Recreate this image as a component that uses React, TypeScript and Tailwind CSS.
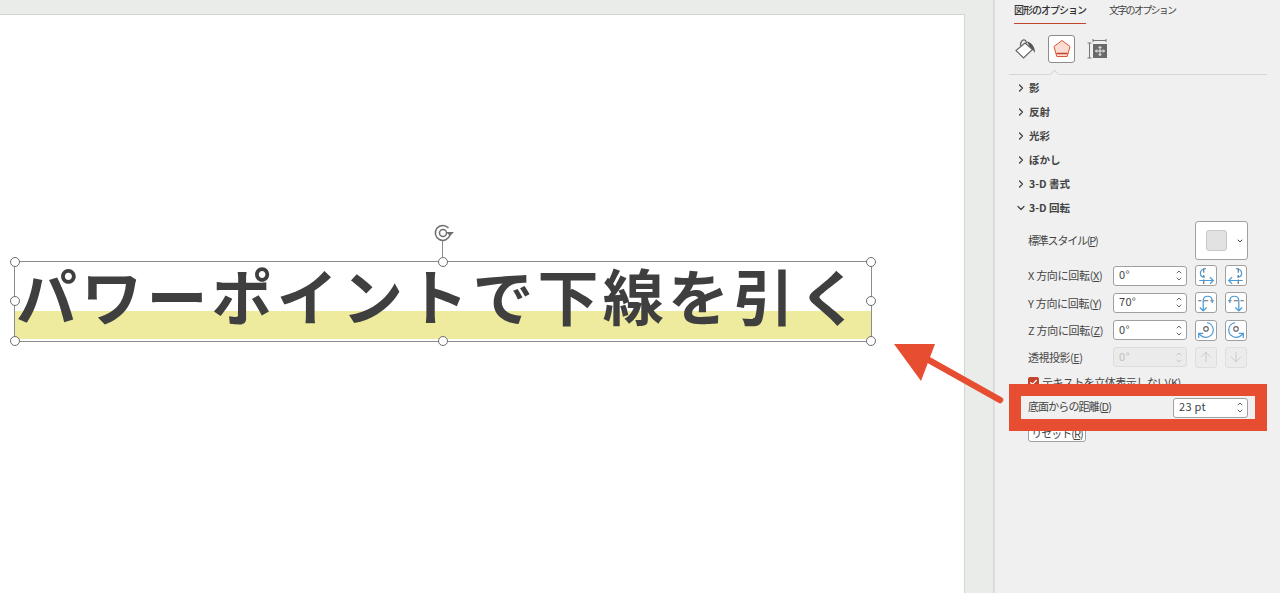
import { ChevronRight, ChevronDown, ChevronUp, ArrowUp, ArrowDown, Check } from 'lucide-react';

const jp = { fontFamily: '"Noto Sans CJK JP", "Liberation Sans", sans-serif' };

const sections = ['影', '反射', '光彩', 'ぼかし', '3-D 書式'];

const Handle = ({ className }: { className: string }) => (
  <div className={`absolute w-[10px] h-[10px] rounded-full bg-white border-[1.5px] border-[#6e6e6e] ${className}`} />
);

const Spin = ({ value, disabled, width = 'w-[74px]' }: { value: string; disabled?: boolean; width?: string }) => (
  <div
    className={`${width} h-[20px] rounded-[3px] border flex items-center justify-between pl-[5px] pr-[3px] ${
      disabled ? 'border-[#dcdcdc] bg-[#ebebeb] text-[#bdbdbd]' : 'border-[#a0a0a0] bg-white text-[#444]'
    }`}
  >
    <span className="text-[11px] leading-none mb-[2px] tracking-[0.3px]">{value}</span>
    <div className="flex flex-col">
      <ChevronUp size={8} strokeWidth={2.5} className="-mb-[1px]" />
      <ChevronDown size={8} strokeWidth={2.5} />
    </div>
  </div>
);

const RotateIcon = ({ kind }: { kind: number }) => {
  const c = '#4a9bd4';
  const d = '#666';
  const flip = kind % 2 === 1 ? 'scale(-1 1) translate(-16 0)' : undefined;
  if (kind < 2) {
    return (
      <svg width="18" height="18" viewBox="0 0 16 16" fill="none">
        <g transform={flip}>
          <path d="M6 1v4M6 7v2M6 11v4" stroke={d} strokeWidth="1" />
          <path d="M8 1.500C4.500 1.500 3 3.500 3 5.500S4.500 9 7 9" stroke={c} strokeWidth="1.100" />
          <path d="M2 12h12.500M11.500 9l3 3-3 3" stroke={c} strokeWidth="1.100" />
        </g>
      </svg>
    );
  }
  if (kind < 4) {
    return (
      <svg width="18" height="18" viewBox="0 0 16 16" fill="none">
        <path d="M1 6h3M6 6h4M12 6h3" stroke={d} strokeWidth="1" />
        <path
          d={kind === 2 ? 'M5.500 15V6c0-2.500 1.500-4 4-4s4 1.500 4 4v2M2.500 12l3 3 3-3' : 'M10.500 15V6c0-2.500-1.500-4-4-4s-4 1.500-4 4v2M7.500 12l3 3 3-3'}
          stroke={c}
          strokeWidth="1.100"
        />
      </svg>
    );
  }
  return (
    <svg width="18" height="18" viewBox="0 0 16 16" fill="none">
      <g transform={kind === 5 ? 'scale(-1 1) translate(-16 0)' : undefined}>
        <circle cx="8" cy="7" r="2" stroke={d} strokeWidth="1" />
        <path d="M9 1.500c3 .5 5.500 3 5.500 6.500 0 3.500-3 6.500-6.500 6.500-2.500 0-4.500-1-6-3M1.500 15v-4H5.500" stroke={c} strokeWidth="1.100" />
      </g>
    </svg>
  );
};

const IconBtn = ({ children, disabled }: { children: React.ReactNode; disabled?: boolean }) => (
  <div
    className={`w-[22px] h-[21px] rounded-[3px] border flex items-center justify-center ${
      disabled ? 'border-[#dedede] bg-[#ececec]' : 'border-[#a0a0a0] bg-white'
    }`}
  >
    {children}
  </div>
);

const RotateRow = ({ label, hot, value, a, b }: { label: string; hot: string; value: string; a: number; b: number }) => (
  <div className="flex items-center h-[27.33px]">
    <div className="w-[85px] text-[11px] text-[#444] whitespace-nowrap tracking-[-0.3px]">
      {label}(<span className="underline">{hot}</span>)
    </div>
    <Spin value={value} />
    <div className="ml-[8px] flex gap-[8px]">
      <IconBtn><RotateIcon kind={a} /></IconBtn>
      <IconBtn><RotateIcon kind={b} /></IconBtn>
    </div>
  </div>
);

const Canvas = () => (
  <div className="relative w-[994px] h-full bg-[#e9ece9] border-r border-[#d8d8d8] pt-[14px] overflow-hidden">
    <div className="w-[965px] h-full bg-white border-t border-r border-[#d4d4d4]" />

    {/* selection box */}
    <div className="absolute left-[14px] top-[261px] w-[858px] h-[81px] border border-[#8c8c8c]">
      <div className="absolute left-0 right-0 top-[49px] h-[28px] bg-[#eeeb9e]" />
      <div
        className="absolute left-[1px] top-[-12px] whitespace-nowrap text-[61px] leading-[90px] font-bold text-[#3f3f3f] tracking-[4.2px]"
        style={jp}
      >
        パワーポイントで下線を引く
      </div>
      <Handle className="-left-[5px] -top-[5px]" />
      <Handle className="left-[423px] -top-[5px]" />
      <Handle className="-right-[5px] -top-[5px]" />
      <Handle className="-left-[5px] top-[34px]" />
      <Handle className="-right-[5px] top-[34px]" />
      <Handle className="-left-[5px] -bottom-[5px]" />
      <Handle className="left-[423px] -bottom-[5px]" />
      <Handle className="-right-[5px] -bottom-[5px]" />
      <div className="absolute left-[427px] -top-[21px] w-px h-[17px] bg-[#8c8c8c]" />
      <svg className="absolute left-[417px] -top-[39px]" width="24" height="20" viewBox="0 0 24 20" fill="none">
        <path d="M16.500 5A7.500 7.500 0 1 0 18 12" stroke="#6e6e6e" strokeWidth="1.500" />
        <circle cx="11" cy="10" r="3.500" stroke="#6e6e6e" strokeWidth="1.500" />
        <path d="M14 9h8l-4 4z" fill="#6e6e6e" />
      </svg>
    </div>
  </div>
);

const Panel = () => (
  <div className="w-[286px] h-full bg-[#f0f0f0] border-l border-[#e0e0e0] text-[#333]" style={jp}>
    <div className="flex pl-[19px] h-[24px]">
      <div className="w-[72px] h-[24px] border-b-[1.5px] border-[#c4432b] text-[10px] tracking-[-1px] font-medium leading-[20px] whitespace-nowrap">
        図形のオプション
      </div>
      <div className="ml-[23px] text-[10px] tracking-[-1.7px] leading-[20px] text-[#444] whitespace-nowrap">文字のオプション</div>
    </div>

    <div className="flex items-center pl-[19px] gap-[11px] mt-[11px] h-[28px]">
      <svg width="23" height="23" viewBox="0 0 23 23" fill="none">
        <path d="M11 5 2 12.500l7.500 7.500 9-8.500z" fill="#fff" stroke="#666" strokeWidth="1.200" />
        <path d="M6.500 8c-.5-5 3-7 5-5.500l1.500 3" stroke="#666" strokeWidth="1.200" />
        <path d="M13 3.500c5 1 8 5.500 8 11.500l-2.500-3.500-3-3z" fill="#555" />
      </svg>
      <div className="w-[27px] h-[28px] rounded-[3px] border border-[#8c8c8c] bg-white flex items-center justify-center">
        <svg width="20" height="20" viewBox="0 0 20 20" fill="none">
          <path d="M10 1.500 18 7.500l-2.800 10H4.800L2 7.500z" fill="#fbdcd2" stroke="#d9573a" strokeWidth="1" />
          <path d="M4.500 14.500h11" stroke="#c4432b" strokeWidth="1.500" />
        </svg>
      </div>
      <svg className="ml-[1px]" width="20" height="20" viewBox="0 0 20 20" fill="none">
        <path d="M2.500 4v15M0.500 4h4M0.500 19h4M6 1.500h13M6 0v3M19 0v3" stroke="#777" strokeWidth="1" />
        <rect x="6" y="5" width="14" height="14" fill="#6a6a6a" />
        <path d="M8.500 12h9M10 10.500 8.500 12l1.500 1.500M16 10.500l1.500 1.500-1.500 1.500M13 7.500v9M11.500 9 13 7.500 14.500 9M11.500 15l1.500 1.500 1.500-1.500" stroke="#fff" strokeWidth=".9" />
      </svg>
    </div>

    <div className="relative mt-[11px] mx-[14px] w-[258px] border-t border-[#d6d6d6]">
      <div className="absolute left-[42px] -top-[4px] w-[7px] h-[7px] rotate-45 bg-[#f0f0f0] border-l border-t border-[#d6d6d6]" />
    </div>

    <div className="pt-[1px]">
      {sections.map(s => (
        <div key={s} className="flex items-center h-[24px] pl-[20px]">
          <ChevronRight size={12} strokeWidth={2.5} className="text-[#444]" />
          <span className="ml-[2px] text-[10.5px] font-bold text-[#444]">{s}</span>
        </div>
      ))}
      <div className="flex items-center h-[24px] pl-[20px]">
        <ChevronDown size={12} strokeWidth={2.5} className="text-[#444]" />
        <span className="ml-[2px] text-[10.5px] font-bold text-[#444]">3-D 回転</span>
      </div>
    </div>

    <div className="pl-[33px]">
      <div className="flex items-center justify-between w-[220px] h-[39px] mt-[1px]">
        <span className="text-[11px] text-[#444] tracking-[-1.2px] whitespace-nowrap">
          標準スタイル(<span className="underline">P</span>)
        </span>
        <div className="w-[53px] h-[39px] rounded-[3px] border border-[#a0a0a0] bg-white flex items-center pl-[10px] gap-[9px]">
          <div className="w-[21px] h-[21px] rounded-[3px] bg-[#e2e2e2] border border-[#c8c8c8]" />
          <ChevronDown size={8} strokeWidth={3} className="text-[#444]" />
        </div>
      </div>

      <div className="mt-[2px]">
        <RotateRow label="X 方向に回転" hot="X" value="0°" a={0} b={1} />
        <RotateRow label="Y 方向に回転" hot="Y" value="70°" a={2} b={3} />
        <RotateRow label="Z 方向に回転" hot="Z" value="0°" a={4} b={5} />
        <div className="flex items-center h-[27px]">
          <div className="w-[85px] text-[11px] text-[#444] whitespace-nowrap tracking-[-0.5px]">
            透視投影(<span className="underline">E</span>)
          </div>
          <Spin value="0°" disabled />
          <div className="ml-[8px] flex gap-[8px]">
            <IconBtn disabled><ArrowUp size={16} strokeWidth={1} className="text-[#bdbdbd]" /></IconBtn>
            <IconBtn disabled><ArrowDown size={16} strokeWidth={1} className="text-[#bdbdbd]" /></IconBtn>
          </div>
        </div>
      </div>

      <div className="flex items-center h-[13px] mt-[5px]">
        <div className="w-[11px] h-[11px] rounded-[2px] bg-[#c4432b] flex items-center justify-center">
          <Check size={9} strokeWidth={3} className="text-white" />
        </div>
        <span className="ml-[3px] text-[11px] tracking-[-0.5px] text-[#444] whitespace-nowrap">テキストを立体表示しない(K)</span>
      </div>

      <div className="mt-[36px] w-[58px] h-[17px] rounded-[3px] border border-[#a0a0a0] bg-white text-[11px] tracking-[-1px] leading-[15px] text-center text-[#444] whitespace-nowrap">
        リセット(<span className="underline">R</span>)
      </div>
    </div>
  </div>
);

export default function App() {
  return (
    <div className="relative w-[1280px] h-[593px] overflow-hidden flex bg-white" style={jp}>
      <Canvas />
      <Panel />

      {/* highlight over the distance row */}
      <div className="absolute left-[1009px] top-[384px] w-[258px] h-[47px] border-[12px] border-[#e64d31] bg-[#f0f0f0] flex items-center justify-between pl-[7px] pr-[7px]">
        <span className="text-[11px] text-[#444] whitespace-nowrap tracking-[-0.9px] mb-[2px]">
          底面からの距離(<span className="underline">D</span>)
        </span>
        <Spin value="23 pt" width="w-[75px]" />
      </div>

      <svg className="absolute left-[890px] top-[340px]" width="115" height="65" viewBox="0 0 115 65" fill="none">
        <path d="M110 60 28 14" stroke="#e64d31" strokeWidth="6.500" strokeLinecap="round" />
        <path d="M4 4h41L31 41z" fill="#e64d31" />
      </svg>
    </div>
  );
}
